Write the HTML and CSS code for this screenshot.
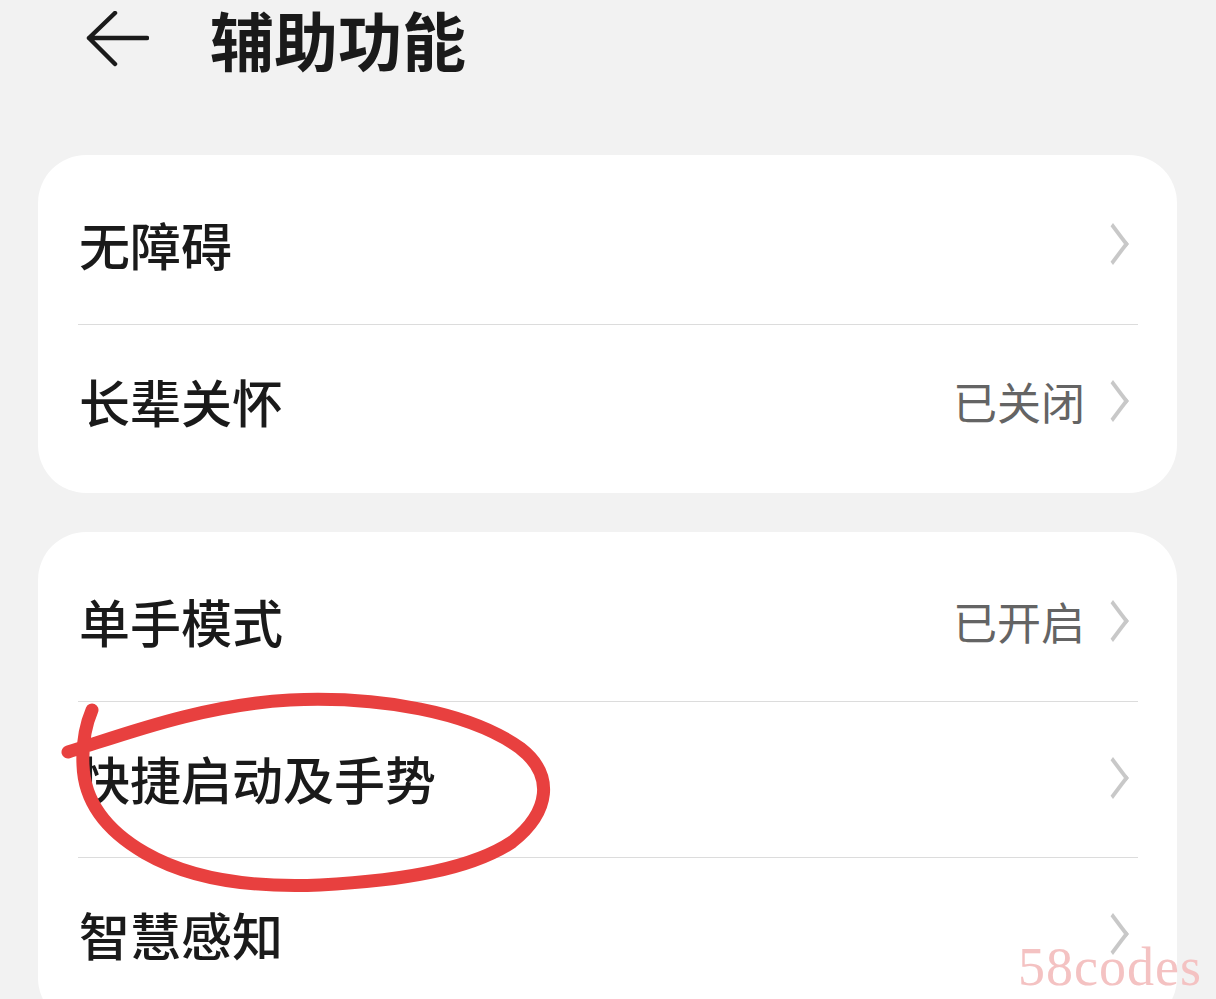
FILE: index.html
```html
<!DOCTYPE html>
<html lang="zh-CN">
<head>
  <meta charset="UTF-8" />
  <meta name="viewport" content="width=device-width, initial-scale=1.0"/>
  <title>辅助功能</title>
  <link rel="stylesheet" href="styles.css">
</head>
<body>
  <div class="header">
    <svg class="back" width="64" height="56" viewBox="0 0 64 56">
      <path d="M62 27 H4 M30 2 L4 27 L30 53" fill="none" stroke="#1b1b1b" stroke-width="4.5" stroke-linecap="round" stroke-linejoin="round"/>
    </svg>
    <h1>辅助功能</h1>
  </div>

  <!-- group 1 -->
  <div class="card">
    <div class="row">
      <span class="label">无障碍</span>
      <span class="chev"></span>
    </div>
    <div class="row">
      <span class="label">长辈关怀</span>
      <span class="value">已关闭</span>
      <span class="chev"></span>
    </div>
  </div>

  <!-- group 2 -->
  <div class="card">
    <div class="row">
      <span class="label">单手模式</span>
      <span class="value">已开启</span>
      <span class="chev"></span>
    </div>
    <div class="row">
      <span class="label">快捷启动及手势</span>
      <span class="chev"></span>
    </div>
    <div class="row">
      <span class="label">智慧感知</span>
      <span class="chev"></span>
    </div>
  </div>

  <!-- hand-drawn mark -->
  <svg class="scribble" width="560" height="220" viewBox="60 685 560 220">
    <path d="M68 752 C120 736 200 705 290 700 C380 696 470 712 520 748 C555 775 550 812 512 842 C470 870 400 881 320 885 C250 888 190 879 145 853 C100 827 84 795 83 765 C82 742 86 724 92 710"
      fill="none" stroke="#e8403f" stroke-width="13" stroke-linecap="round" stroke-linejoin="round"/>
  </svg>

  <div class="mark">58codes</div>
</body>
</html>
```

FILE: styles.css
```css
:root {
  --bg: #f2f2f2;
  --white: #ffffff;
  --text: #1a1a1a;
  --sub: #646464;
  --line: #dcdcdc;
  --radius: 48px;
}

body {
  margin: 0;
  background: var(--bg);
  font-family: "Noto Sans CJK SC", "Noto Sans", sans-serif;
  color: var(--text);
  height: 999px;
  overflow: hidden;
  position: relative;
}

.header {
  display: flex;
  align-items: center;
  height: 76px;
  padding-left: 85px;
  margin-bottom: 79px;
}

.back {
  display: block;
  margin-top: 2px;
}

h1 {
  margin: 0 0 0 61px;
  font-size: 64px;
  font-weight: 700;
  line-height: 70px;
}

.card {
  background: var(--white);
  border-radius: var(--radius);
  margin: 0 39px 39px 38px;
  padding: 13px 0;
}

.row {
  display: flex;
  align-items: center;
  height: 156px;
  margin: 0 39px 0 40px;
  padding-right: 7px;
  padding-bottom: 4px;
  box-sizing: border-box;
  border-top: 1px solid var(--line);
}

.row:first-child {
  border-top: none;
}

.label {
  flex: 1;
  font-size: 51px;
  font-weight: 500;
  padding-left: 1px;
}

.value {
  font-size: 44px;
  color: var(--sub);
  margin-right: 26px;
}

.chev {
  width: 20px;
  height: 40px;
  position: relative;
  flex-shrink: 0;
}

.chev::before {
  content: "";
  position: absolute;
  left: -11px;
  top: 7px;
  width: 26px;
  height: 26px;
  border-top: 4px solid #c8c8c8;
  border-right: 4px solid #c8c8c8;
  transform: rotate(45deg) skew(8deg, 8deg);
  box-sizing: border-box;
}

.scribble {
  position: absolute;
  left: 60px;
  top: 685px;
}

.mark {
  position: absolute;
  right: 14px;
  top: 936px;
  font-family: "Liberation Serif", serif;
  font-size: 54px;
  color: #f4c2c2;
  letter-spacing: 1px;
}
```
